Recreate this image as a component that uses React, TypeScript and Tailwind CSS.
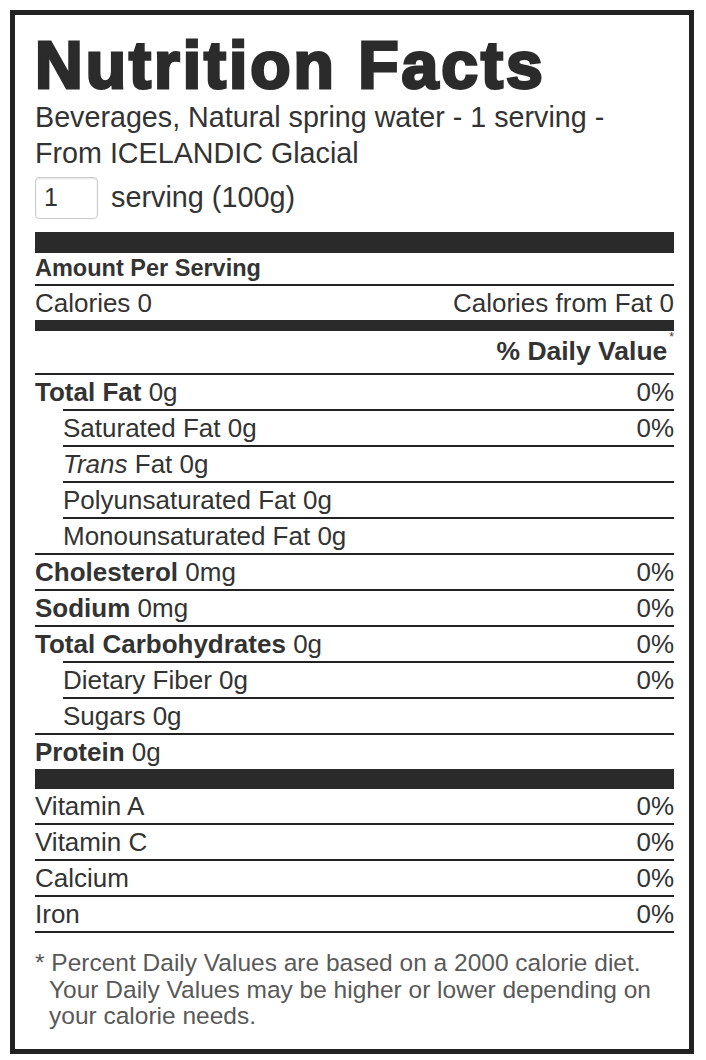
import React from 'react';

const fatRows = [
  { label: 'Saturated Fat', value: '0g', dv: '0%' },
  { label: 'Trans', italic: true, value: 'Fat 0g', dv: '' },
  { label: 'Polyunsaturated Fat', value: '0g', dv: '' },
  { label: 'Monounsaturated Fat', value: '0g', dv: '' },
];

const vitamins = [
  { label: 'Vitamin A', dv: '0%' },
  { label: 'Vitamin C', dv: '0%' },
  { label: 'Calcium', dv: '0%' },
  { label: 'Iron', dv: '0%' },
];

function MainRow({ label, value, dv }: { label: string; value: string; dv?: string }) {
  return (
    <div className="h-[36px] border-t-2 border-[#222] flex items-center justify-between">
      <span>
        <b className="font-bold">{label}</b> {value}
      </span>
      {dv && <span>{dv}</span>}
    </div>
  );
}

function SubRow({ label, value, dv, italic }: { label: string; value: string; dv?: string; italic?: boolean }) {
  return (
    <div className="h-[36px] ml-[28px] border-t-2 border-[#222] flex items-center justify-between">
      <span>
        {italic ? <i>{label}</i> : label} {value}
      </span>
      {dv && <span>{dv}</span>}
    </div>
  );
}

export default function App() {
  return (
    <div className="w-[706px] h-[1060px] bg-white pt-[10px] pl-[10px]">
      <div className="w-[684px] h-[1044px] border-[5px] border-[#222] pl-5 pr-[15px] text-[#333] font-['Liberation_Sans',Arial,sans-serif] flex flex-col">
        {/* title */}
        <h1 className="pt-[17px] h-[84px] text-[66px] leading-[66px] font-bold text-[#2b2b2b] tracking-[3px] [-webkit-text-stroke:3px_#2b2b2b]">
          Nutrition Facts
        </h1>
        <p className="text-[28.7px] leading-[36px]">
          Beverages, Natural spring water - 1 serving -<br />From ICELANDIC Glacial
        </p>
        <div className="mt-[6px] h-[42px] flex items-center gap-[13px]">
          <div className="w-[63px] h-[42px] border border-[#ccc] rounded-[4px] shadow-[inset_0_1px_2px_rgba(0,0,0,0.12)] flex items-center pl-[8px] text-[25px]">
            1
          </div>
          <span className="text-[28.8px]">serving (100g)</span>
        </div>

        <div className="mt-[13px] h-[21px] bg-[#2a2a2a]" />
        <div className="h-[31px] flex items-center text-[23.5px] font-bold">Amount Per Serving</div>
        <div className="h-[36px] border-t-2 border-[#222] flex items-center justify-between text-[26px]">
          <span>Calories 0</span>
          <span>Calories from Fat 0</span>
        </div>
        <div className="h-[11px] bg-[#2a2a2a]" />
        <div className="h-[42px] flex items-center justify-end text-[26.5px] font-bold">
          % Daily Value<sup className="text-[12px] font-normal -mt-[18px] ml-[2px]">*</sup>
        </div>

        <div className="text-[26px]">
          <MainRow label="Total Fat" value="0g" dv="0%" />
          {fatRows.map((r) => (
            <SubRow key={r.label} {...r} />
          ))}
          <MainRow label="Cholesterol" value="0mg" dv="0%" />
          <MainRow label="Sodium" value="0mg" dv="0%" />
          <MainRow label="Total Carbohydrates" value="0g" dv="0%" />
          <SubRow label="Dietary Fiber" value="0g" dv="0%" />
          <SubRow label="Sugars" value="0g" />
          <MainRow label="Protein" value="0g" />
          <div className="h-[20px] bg-[#2a2a2a]" />
          {vitamins.map((v) => (
            <div key={v.label} className="h-[36px] border-b-2 border-[#222] flex items-center justify-between">
              <span>{v.label}</span>
              <span>{v.dv}</span>
            </div>
          ))}
        </div>

        <div className="mt-[17px] pl-[14px] -indent-[14px] text-[24.5px] leading-[26.5px] text-[#595959]">
          * Percent Daily Values are based on a 2000 calorie diet.
          <br />
          Your Daily Values may be higher or lower depending on
          <br />
          your calorie needs.
        </div>
      </div>
    </div>
  );
}
